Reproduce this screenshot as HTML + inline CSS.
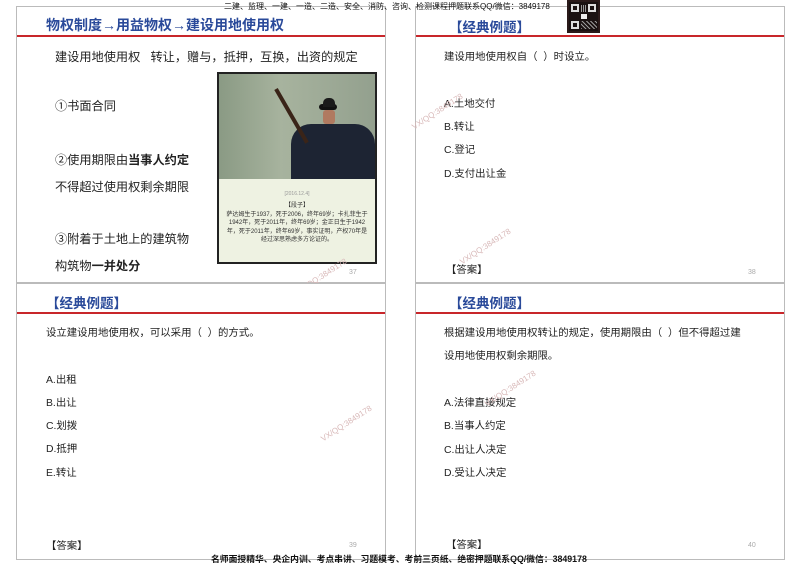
<!DOCTYPE html>
<html><head><meta charset="utf-8"><style>
*{margin:0;padding:0;box-sizing:border-box}
body{width:800px;height:566px;background:#fff;position:relative;overflow:hidden;font-family:"Liberation Sans","Noto Sans CJK SC",sans-serif;color:#222}
.s{position:absolute;border:1px solid #bbb;background:#fff}
.red{position:absolute;left:0;right:0;height:2px;background:#c8262a}
.t{position:absolute;font-weight:bold;color:#2a4a9a;font-size:13.5px;white-space:nowrap}
.p{position:absolute;font-size:10.4px;white-space:nowrap;color:#222}
.b{position:absolute;font-size:12.2px;white-space:nowrap;color:#222}
.n{position:absolute;font-size:7px;color:#aaa}
.wm{position:absolute;font-size:8px;color:#d8b8b8;transform:rotate(-33deg);white-space:nowrap}
.bar{position:absolute;font-size:8px;color:#111;white-space:nowrap;font-weight:bold}
</style></head><body>
<!-- top-left -->
<div class="s" style="left:16px;top:6px;width:370px;height:277px">
 <div class="t" style="left:29px;top:8px;font-size:14px">物权制度→用益物权→建设用地使用权</div>
 <div class="red" style="top:28px"></div>
 <div class="b" style="left:38px;top:40px">建设用地使用权&nbsp;&nbsp;&nbsp;转让，赠与，抵押，互换，出资的规定</div>
 <div class="b" style="left:38px;top:89px">①书面合同</div>
 <div class="b" style="left:38px;top:143px">②使用期限由<b>当事人约定</b></div>
 <div class="b" style="left:38px;top:170px">不得超过使用权剩余期限</div>
 <div class="b" style="left:38px;top:222px">③附着于土地上的建筑物</div>
 <div class="b" style="left:38px;top:249px">构筑物<b>一并处分</b></div>
 <div style="position:absolute;left:200px;top:65px;width:160px;height:192px;border:2px solid #222;background:#eef2e2;overflow:hidden">
  <div style="position:absolute;left:0;top:0;width:156px;height:105px;background:linear-gradient(90deg,#8a9a84,#a7b39e 40%,#93a08e)">
   <div style="position:absolute;left:100px;top:30px;width:18px;height:6px;background:#111;border-radius:3px"></div>
   <div style="position:absolute;left:104px;top:24px;width:12px;height:9px;background:#1a1a1a;border-radius:5px 5px 0 0"></div>
   <div style="position:absolute;left:104px;top:36px;width:12px;height:14px;background:#b07a60;border-radius:3px"></div>
   <div style="position:absolute;left:72px;top:50px;width:84px;height:55px;background:#1d2433;border-radius:20px 20px 0 0"></div>
   <div style="position:absolute;left:55px;top:15px;width:4px;height:62px;background:#3a2418;transform:rotate(-30deg);transform-origin:top"></div>
  </div>
  <div style="position:absolute;left:0;top:117px;width:156px;text-align:center;font-size:5px;color:#999">[2016.12.4]</div>
  <div style="position:absolute;left:6px;top:128px;width:144px;text-align:center;font-size:6px;line-height:8.5px;color:#333">【段子】<br>萨达姆生于1937，死于2006，终年69岁；卡扎菲生于1942年，死于2011年，终年69岁；金正日生于1942年，死于2011年，终年69岁，事实证明，产权70年是经过深思熟虑多方论证的。</div>
 </div>
 <div class="n" style="left:332px;top:262px">37</div>
 <div class="wm" style="left:275px;top:265px">VX/QQ:3849178</div>
</div>
<!-- top-right -->
<div class="s" style="left:415px;top:6px;width:370px;height:277px">
 <div class="t" style="left:33px;top:9px">【经典例题】</div>
 <div class="red" style="top:28px"></div>
 <div class="p" style="left:28px;top:41px">建设用地使用权自（&nbsp;&nbsp;）时设立。</div>
 <div class="p" style="left:28px;top:88px">A.土地交付</div>
 <div class="p" style="left:28px;top:111px">B.转让</div>
 <div class="p" style="left:28px;top:134px">C.登记</div>
 <div class="p" style="left:28px;top:158px">D.支付出让金</div>
 <div class="p" style="left:30px;top:254px">【答案】</div>
 <div class="n" style="left:332px;top:262px">38</div>
 <div class="wm" style="left:-8px;top:100px">VX/QQ:3849178</div>
 <div class="wm" style="left:40px;top:235px">VX/QQ:3849178</div>
</div>
<!-- bottom-left -->
<div class="s" style="left:16px;top:283px;width:370px;height:277px">
 <div class="t" style="left:29px;top:8px">【经典例题】</div>
 <div class="red" style="top:28px"></div>
 <div class="p" style="left:29px;top:40px">设立建设用地使用权，可以采用（&nbsp;&nbsp;）的方式。</div>
 <div class="p" style="left:29px;top:87px">A.出租</div>
 <div class="p" style="left:29px;top:110px">B.出让</div>
 <div class="p" style="left:29px;top:133px">C.划拨</div>
 <div class="p" style="left:29px;top:156px">D.抵押</div>
 <div class="p" style="left:29px;top:180px">E.转让</div>
 <div class="p" style="left:29px;top:253px">【答案】</div>
 <div class="n" style="left:332px;top:258px">39</div>
 <div class="wm" style="left:300px;top:135px">VX/QQ:3849178</div>
</div>
<!-- bottom-right -->
<div class="s" style="left:415px;top:283px;width:370px;height:277px">
 <div class="t" style="left:33px;top:8px">【经典例题】</div>
 <div class="red" style="top:28px"></div>
 <div class="p" style="left:28px;top:40px">根据建设用地使用权转让的规定，使用期限由（&nbsp;&nbsp;）但不得超过建</div>
 <div class="p" style="left:28px;top:63px">设用地使用权剩余期限。</div>
 <div class="p" style="left:28px;top:110px">A.法律直接规定</div>
 <div class="p" style="left:28px;top:133px">B.当事人约定</div>
 <div class="p" style="left:28px;top:157px">C.出让人决定</div>
 <div class="p" style="left:28px;top:180px">D.受让人决定</div>
 <div class="p" style="left:30px;top:252px">【答案】</div>
 <div class="n" style="left:332px;top:258px">40</div>
 <div class="wm" style="left:65px;top:100px">VX/QQ:3849178</div>
</div>
<div class="bar" style="left:224px;top:1px;font-weight:normal">二建、监理、一建、一造、二造、安全、消防、咨询、检测课程押题联系QQ/微信：3849178</div>
<div style="position:absolute;left:567px;top:0;width:33px;height:33px;background:#1a1212;border:2px solid #2a1a1a">
 <div style="position:absolute;left:2px;top:2px;width:8px;height:8px;border:2px solid #ddd"></div>
 <div style="position:absolute;right:2px;top:2px;width:8px;height:8px;border:2px solid #ddd"></div>
 <div style="position:absolute;left:2px;bottom:2px;width:8px;height:8px;border:2px solid #ddd"></div>
 <div style="position:absolute;left:12px;top:12px;width:6px;height:5px;background:#eee"></div>
 <div style="position:absolute;left:12px;top:3px;width:6px;height:7px;background:repeating-linear-gradient(90deg,#999 0 1px,transparent 1px 2px)"></div>
 <div style="position:absolute;left:12px;top:19px;width:16px;height:8px;background:repeating-linear-gradient(45deg,#999 0 1px,transparent 1px 3px)"></div>
</div>
<div class="bar" style="left:211px;top:552px;font-size:8.8px">名师面授精华、央企内训、考点串讲、习题模考、考前三页纸、绝密押题联系QQ/微信：3849178</div>
</body></html>
